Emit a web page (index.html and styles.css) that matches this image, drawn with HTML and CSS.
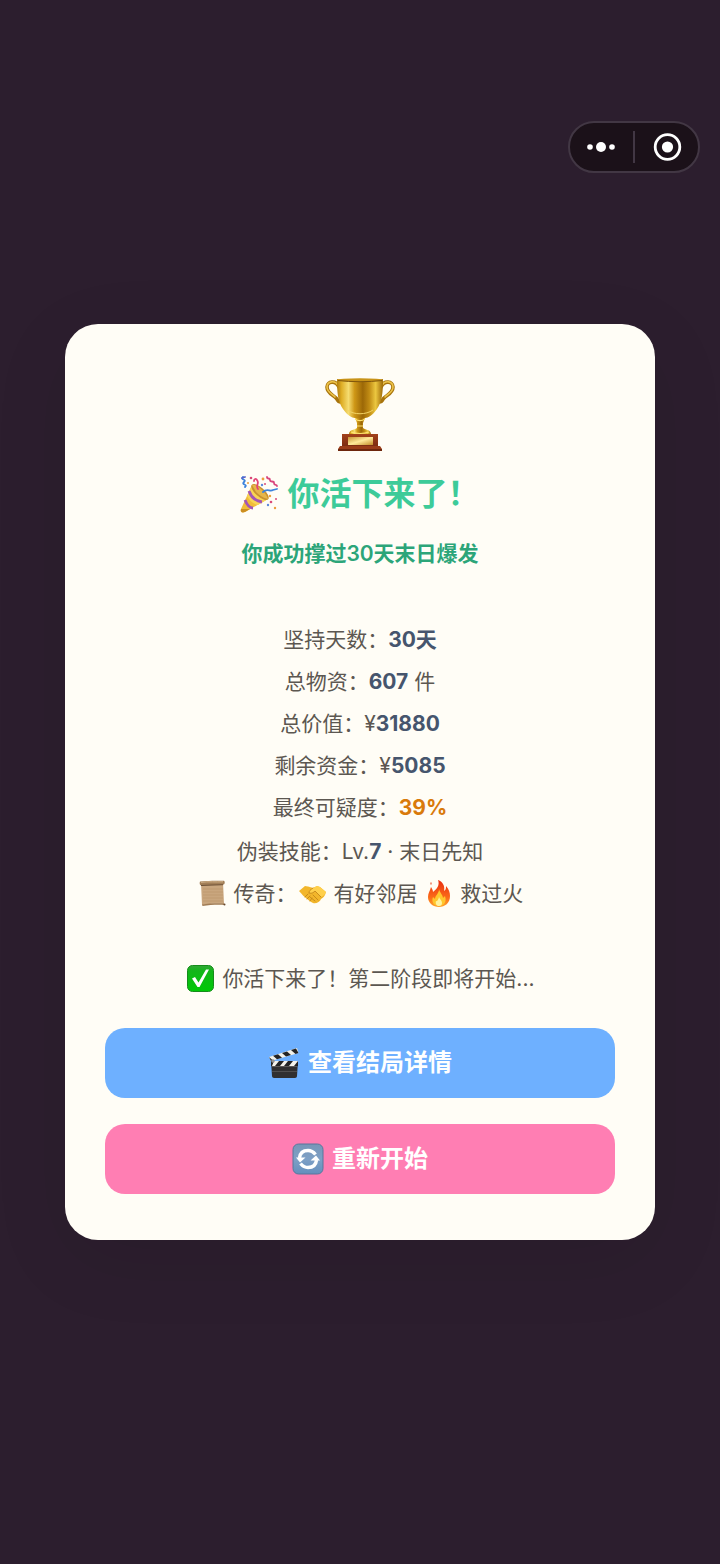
FILE: index.html
```html
<!DOCTYPE html>
<html lang="zh-CN">
<head>
<meta charset="utf-8">
<meta name="viewport" content="width=device-width, initial-scale=1">
<title>你活下来了！</title>
<link rel="stylesheet" href="styles.css">
</head>
<body>
<div class="capsule">
  <button class="capsule-btn" type="button" aria-label="更多">
    <svg width="30" height="30" viewBox="0 0 30 30"><g fill="#fff"><circle cx="3" cy="15" r="2.800"/><circle cx="14" cy="15" r="5"/><circle cx="25" cy="15" r="2.800"/></g></svg>
  </button>
  <span class="capsule-line"></span>
  <button class="capsule-btn" type="button" aria-label="关闭">
    <svg width="30" height="30" viewBox="0 0 30 30"><circle cx="15.500" cy="15" r="12.300" fill="none" stroke="#fff" stroke-width="2.800"/><circle cx="15.500" cy="15" r="5.600" fill="#fff"/></svg>
  </button>
</div>

<main class="card">
  <svg class="trophy" viewBox="0 0 86 86" aria-hidden="true">
    <defs>
      <linearGradient id="gold" x1="0" x2="1" y1="0" y2="0">
        <stop offset="0" stop-color="#b07c0c"/><stop offset=".1" stop-color="#dfae26"/><stop offset=".25" stop-color="#f5dc70"/><stop offset=".38" stop-color="#cf9817"/><stop offset=".56" stop-color="#9c6807"/><stop offset=".7" stop-color="#c08b14"/><stop offset=".84" stop-color="#ecc740"/><stop offset="1" stop-color="#9c6807"/>
      </linearGradient>
      <linearGradient id="plate" x1="0" x2="1" y1="0" y2="1">
        <stop offset="0" stop-color="#c89532"/><stop offset=".5" stop-color="#ffe99a"/><stop offset="1" stop-color="#c28a27"/>
      </linearGradient>
      <linearGradient id="wood" x1="0" x2="0" y1="0" y2="1">
        <stop offset="0" stop-color="#a3421b"/><stop offset="1" stop-color="#7a2a10"/>
      </linearGradient>
    </defs>
    <g fill="none" stroke-linecap="round">
      <g stroke="#a8740c" stroke-width="3.600"><path d="M22 17C19 10 10 11 10 17c0 6 6 8 9 11 2 2 2 4 4 4"/><path d="M64 17c3-7 12-6 12 0 0 6-6 8-9 11-2 2-2 4-4 4"/></g>
      <g stroke="#ecc34a" stroke-width="1.600"><path d="M21 15C18 10 10 11 10 17c0 5 5 7 8 10"/><path d="M65 15c3-5 11-4 11 2 0 5-5 7-8 10"/></g>
    </g>
    <path d="M20 9c15 3 31 3 46 0 0 14-1 23-6 30-4 6-9 9-12 9H38c-3 0-8-3-12-9-5-7-6-16-6-30z" fill="url(#gold)"/>
    <ellipse cx="43" cy="10" rx="23" ry="1.800" fill="#c89318"/>
    <path d="M21 10.500c13 1.600 31 1.600 44 0" fill="none" stroke="#80560c" stroke-width="1"/>
    <path d="M30 40c7 5 19 5 26 0" fill="none" stroke="#f3d465" stroke-width="1"/>
    <path d="M38 48h10l-2 5v5c3 2 8 2 8 6H32c0-4 5-4 8-6v-5z" fill="url(#gold)"/>
    <path d="M38 49c3 2 7 2 10 0M40 56h6M34 62c5 2 13 2 18 0" fill="none" stroke="#ffe370" stroke-width="1.200"/>
    <path d="M25 64h36v13H25z" fill="url(#wood)"/>
    <path d="M31 67h25v8H31z" fill="url(#plate)"/>
    <path d="M23 76h40l2 3v1H21v-1z" fill="#9a3c18"/><path d="M21 79h44v2H21z" fill="#6d260d"/>
  </svg>

  <h1 class="title">
    <svg class="title-icon" viewBox="0 0 38 38" aria-hidden="true">
      <path d="M12 10L1 34c-1 3 1 4 4 3l23-13z" fill="#f1bd38"/>
      <path d="M12 10L7 21c2 4 6 8 11 9l10-6z" fill="#f8d455"/>
      <path d="M5 25c2 5 4 8 8 8M9 16c2 6 7 10 13 11" fill="none" stroke="#a356b5" stroke-width="2.800"/>
      <path d="M1 34c-1 3 1 4 4 3l5-3z" fill="#cc8e22"/>
      <ellipse cx="20" cy="17" rx="4.500" ry="11" transform="rotate(-48 20 17)" fill="#c9912f"/>
      <path d="M12 10c3-1 7 2 10 5s5 6 6 9c-5-1-9-4-12-7z" fill="#e6b64a"/>
      <g fill="none" stroke-linecap="round" stroke-width="1.800">
        <path d="M3 2c-3 3 4 2 1 5s4 2 1 5M23 17c4-4 7 0 10-2l4-1" stroke="#3d83db"/>
        <path d="M18 14c-3-4 2-5-1-9-1-2-3-1-3 1" stroke="#e34477"/>
        <path d="M27 2c0 3 3 0 3 3s4 0 4 3 3 1 3 3" stroke="#d9467d"/>
        <path d="M2 3l3-1" stroke="#5b65c9"/>
      </g>
      <g fill="#d94b79"><circle cx="11" cy="3" r="1.300"/><circle cx="31" cy="27" r="1.300"/><circle cx="25" cy="9" r="1"/><circle cx="36" cy="24" r="1"/></g>
      <g fill="#ed9e3d"><circle cx="23" cy="4" r="1.400"/><circle cx="30" cy="21" r="1.200"/><circle cx="35" cy="33" r="1.200"/><circle cx="8" cy="8" r="1"/></g>
      <g fill="#608adc"><circle cx="28" cy="30" r="1.200"/><circle cx="22" cy="10" r="1.200"/></g>
    </svg>
    <span>你活下来了！</span>
  </h1>
  <p class="subtitle">你成功撑过30天末日爆发</p>

  <div class="stats">
    <p>坚持天数：<strong>30天</strong></p>
    <p>总物资：<strong>607</strong> 件</p>
    <p>总价值：¥<strong>31880</strong></p>
    <p>剩余资金：¥<strong>5085</strong></p>
    <p>最终可疑度：<strong class="warn">39%</strong></p>
  </div>
  <div class="legend">
    <p>伪装技能：Lv.<strong>7</strong> · 末日先知</p>
    <p>
      <svg class="emoji" viewBox="0 0 27 27" aria-hidden="true">
        <path d="M2 3l22-1 1 22c-7-1-15 0-22 1z" fill="#c9a67e"/>
        <path d="M4 9h20M4 12h20M4 15h20M4 18h20M4 21h20" stroke="#b8936a" stroke-width=".6"/>
        <path d="M1 1.500C8 .6 18 1 25 .8c1 1 1 2.800 0 3.600-8 .6-16 .3-23.500.9C.5 4.500.5 2.500 1 1.500z" fill="#a17e57"/>
        <path d="M2 2.300c8-1 15 0 22-.5" stroke="#d5b58c" stroke-width="1" fill="none"/>
        <path d="M2 5.500c7-.7 15-.2 22-.8" stroke="#6d5035" stroke-width="1" fill="none"/>
        <path d="M3 24.500c7-1 15-1.500 22-1l.5 1.500c-8-.5-15 .2-22 1z" fill="#a17c54"/><circle cx="25.500" cy="24.500" r="1" fill="#67482e"/>
      </svg>
      传奇：<svg class="emoji" viewBox="0 0 27 27" aria-hidden="true">
        <path d="M0 11l6-5c4 1 6 1 8 2l4-2 3 1 6 5c-1 4-3 6-5 7-1 3-5 5-8 4-3-1-4-3-6-4-3-2-5-5-8-8z" fill="#f2b62b"/>
        <path d="M6 6c4 1 6 1 8 2-3 2-4 3-4 5 3 1 5-1 6-2l6 6c2-1 4-2 5-5l-6-5-3-1-4 2-8-2-6 5z" fill="#ffd04c"/>
        <path d="M14 8c-3 2-4 3-4 5 3 1 5-1 6-2l6 6M14 15l5 5M11 17l5 4M6 17l3-3M8 19l3-3M11 21l2-3" fill="none" stroke="#c48719" stroke-width=".9" stroke-linecap="round"/>
      </svg>
      有好邻居
      <svg class="emoji" viewBox="0 0 27 27" aria-hidden="true">
        <defs><linearGradient id="fire" x1="0" x2="0" y1="0" y2="1"><stop offset="0" stop-color="#e92d12"/><stop offset=".65" stop-color="#fb6b18"/><stop offset="1" stop-color="#ffa52b"/></linearGradient></defs>
        <path d="M13 0c5 2 7 6 6 11 2-1 2-3 2-5 3 3 4 7 4 10 0 7-5 11-11 11S3 23 3 17c0-4 2-6 3-10 1 2 2 3 2 5 4-3 7-7 5-12z" fill="url(#fire)"/>
        <path d="M14 9c1 4 4 6 4 9l2-2c2 6-1 10-6 10s-8-4-6-9l2 2c0-4 4-5 4-10z" fill="#ffc62d"/>
        <path d="M14 16c0 3 3 4 3 7 0 2-1 3-3 3s-4-2-3-5c1 1 3-2 3-5z" fill="#fff3a0"/>
        <path d="M6 2c-1 1-1 2 0 3 1-1 1-2 0-3z" fill="#ef6b4c"/>
      </svg>
      救过火
    </p>
  </div>

  <p class="status">
    <svg class="emoji" viewBox="0 0 27 27" aria-hidden="true">
      <defs><linearGradient id="green" x1="0" x2="0" y1="0" y2="1"><stop offset="0" stop-color="#33a737"/><stop offset=".2" stop-color="#13b51a"/><stop offset="1" stop-color="#00c906"/></linearGradient></defs>
      <rect x=".5" y=".5" width="26" height="26" rx="5" fill="url(#green)" stroke="#168c1b"/>
      <path d="M5 13.500l3-1.500 3.500 5.500L19 4.500h3L12.500 22h-2z" fill="#fff"/>
    </svg>
    你活下来了！第二阶段即将开始...
  </p>

  <div class="actions">
    <button class="btn btn-detail" type="button">
      <svg class="btn-icon" viewBox="0 0 32 32" aria-hidden="true">
        <path d="M3 14h27l-1 15c0 1-1 2-2 2H6c-1 0-2-1-2-2z" fill="#302f30"/>
        <path d="M4 19h25v1H4zM4 24h25v.8H4z" fill="#5b5958"/>
        <path d="M3 14h27v5H3z" fill="#f5f3ec"/>
        <path d="M3 14h3l-2 5H3zM11 14h5l-4 5H7zM20 14h5l-4 5h-5zM30 14v5h-4z" fill="#242425"/>
        <path d="M1 10L29 1l1.500 5L3 14z" fill="#f3f1e9"/>
        <path d="M5 8.800l5-1.600 4 3.600-5 1.500zM14 6l5-1.600 4 3.600-5 1.500zM23 3l5-1.600L30.500 6l-3 .9zM1 10l4 3.400-2 .6z" fill="#242425"/>
        <circle cx="5" cy="14" r="1.800" fill="#929292"/>
      </svg>
      <span>查看结局详情</span>
    </button>
    <button class="btn btn-restart" type="button">
      <svg class="btn-icon" viewBox="0 0 32 32" aria-hidden="true">
        <defs><linearGradient id="steel" x1="0" x2="0" y1="0" y2="1"><stop offset="0" stop-color="#7896b7"/><stop offset=".5" stop-color="#7ea0c6"/><stop offset="1" stop-color="#648fbd"/></linearGradient></defs>
        <rect x="1" y="1" width="30" height="30" rx="5.500" fill="url(#steel)" stroke="#59779c"/>
        <g fill="none" stroke="#fff" stroke-width="3.400"><path d="M7.500 15c.5-5 4-7.500 8.500-7.500 3 0 5.500 1.500 7.500 4"/><path d="M24.500 17c-.5 5-4 7.500-8.500 7.500-3 0-5.500-1.500-7.500-4"/></g>
        <path d="M4 14.500h9.500L8 19.500zM28 17.500h-9.500l5.500-5z" fill="#fff"/>
      </svg>
      <span>重新开始</span>
    </button>
  </div>
</main>
</body>
</html>
```

FILE: styles.css
```css
* {
  box-sizing: border-box;
}

body {
  margin: 0;
  min-height: 100vh;
  padding: 0 65px;
  display: flex;
  align-items: center;
  justify-content: center;
  background: #2c1e2e;
  color: #5c5751;
  font-family: Inter, "Noto Sans CJK SC", sans-serif;
  font-size: 21px;
}

h1,
p {
  margin: 0;
}

button {
  border: 0;
  font: inherit;
  color: inherit;
  cursor: pointer;
}

/* floating host controls */
.capsule {
  position: absolute;
  top: 121px;
  right: 20px;
  display: flex;
  align-items: center;
  width: 132px;
  height: 52px;
  border: 2px solid #423744;
  border-radius: 26px;
  background: #1b1119;
}

.capsule-btn {
  flex: 1;
  display: flex;
  align-items: center;
  justify-content: center;
  height: 100%;
  padding: 0;
  background: none;
}

.capsule-line {
  width: 2px;
  height: 32px;
  background: #423744;
}

.card {
  flex: 1;
  padding: 46px 40px;
  border-radius: 33px;
  background: #fffdf6;
  box-shadow: 0 20px 80px rgba(0, 0, 0, 0.08);
  text-align: center;
}

.trophy {
  display: block;
  width: 86px;
  height: 86px;
  margin: 0 auto;
}

.title {
  display: flex;
  align-items: center;
  justify-content: center;
  gap: 9px;
  margin-top: 16px;
  color: #3dcb99;
  font-size: 32px;
  font-weight: 700;
  line-height: 44px;
}

.title-icon {
  width: 38px;
  height: 38px;
}

.subtitle {
  margin-top: 22px;
  color: #2ca579;
  font-weight: 600;
  line-height: 32px;
}

.stats {
  margin-top: 49px;
  line-height: 42px;
}

.legend {
  margin-top: 2px;
  line-height: 42px;
}

.status {
  margin-top: 43px;
  line-height: 42px;
}

strong {
  color: #46556d;
  font-weight: 700;
}

.warn {
  color: #d97a0b;
}

.emoji {
  width: 27px;
  height: 27px;
  margin: 0 2px;
  vertical-align: -6px;
}

.actions {
  display: flex;
  flex-direction: column;
  gap: 26px;
  margin-top: 28px;
}

.btn {
  display: flex;
  align-items: center;
  justify-content: center;
  gap: 8px;
  padding: 17px 20px;
  border-radius: 20px;
  color: #fff;
  font-size: 24px;
  font-weight: 600;
  line-height: 36px;
}

.btn-icon {
  width: 32px;
  height: 32px;
}

.btn-detail {
  background: #6eb0ff;
}

.btn-restart {
  background: #ff7eb3;
}
```
